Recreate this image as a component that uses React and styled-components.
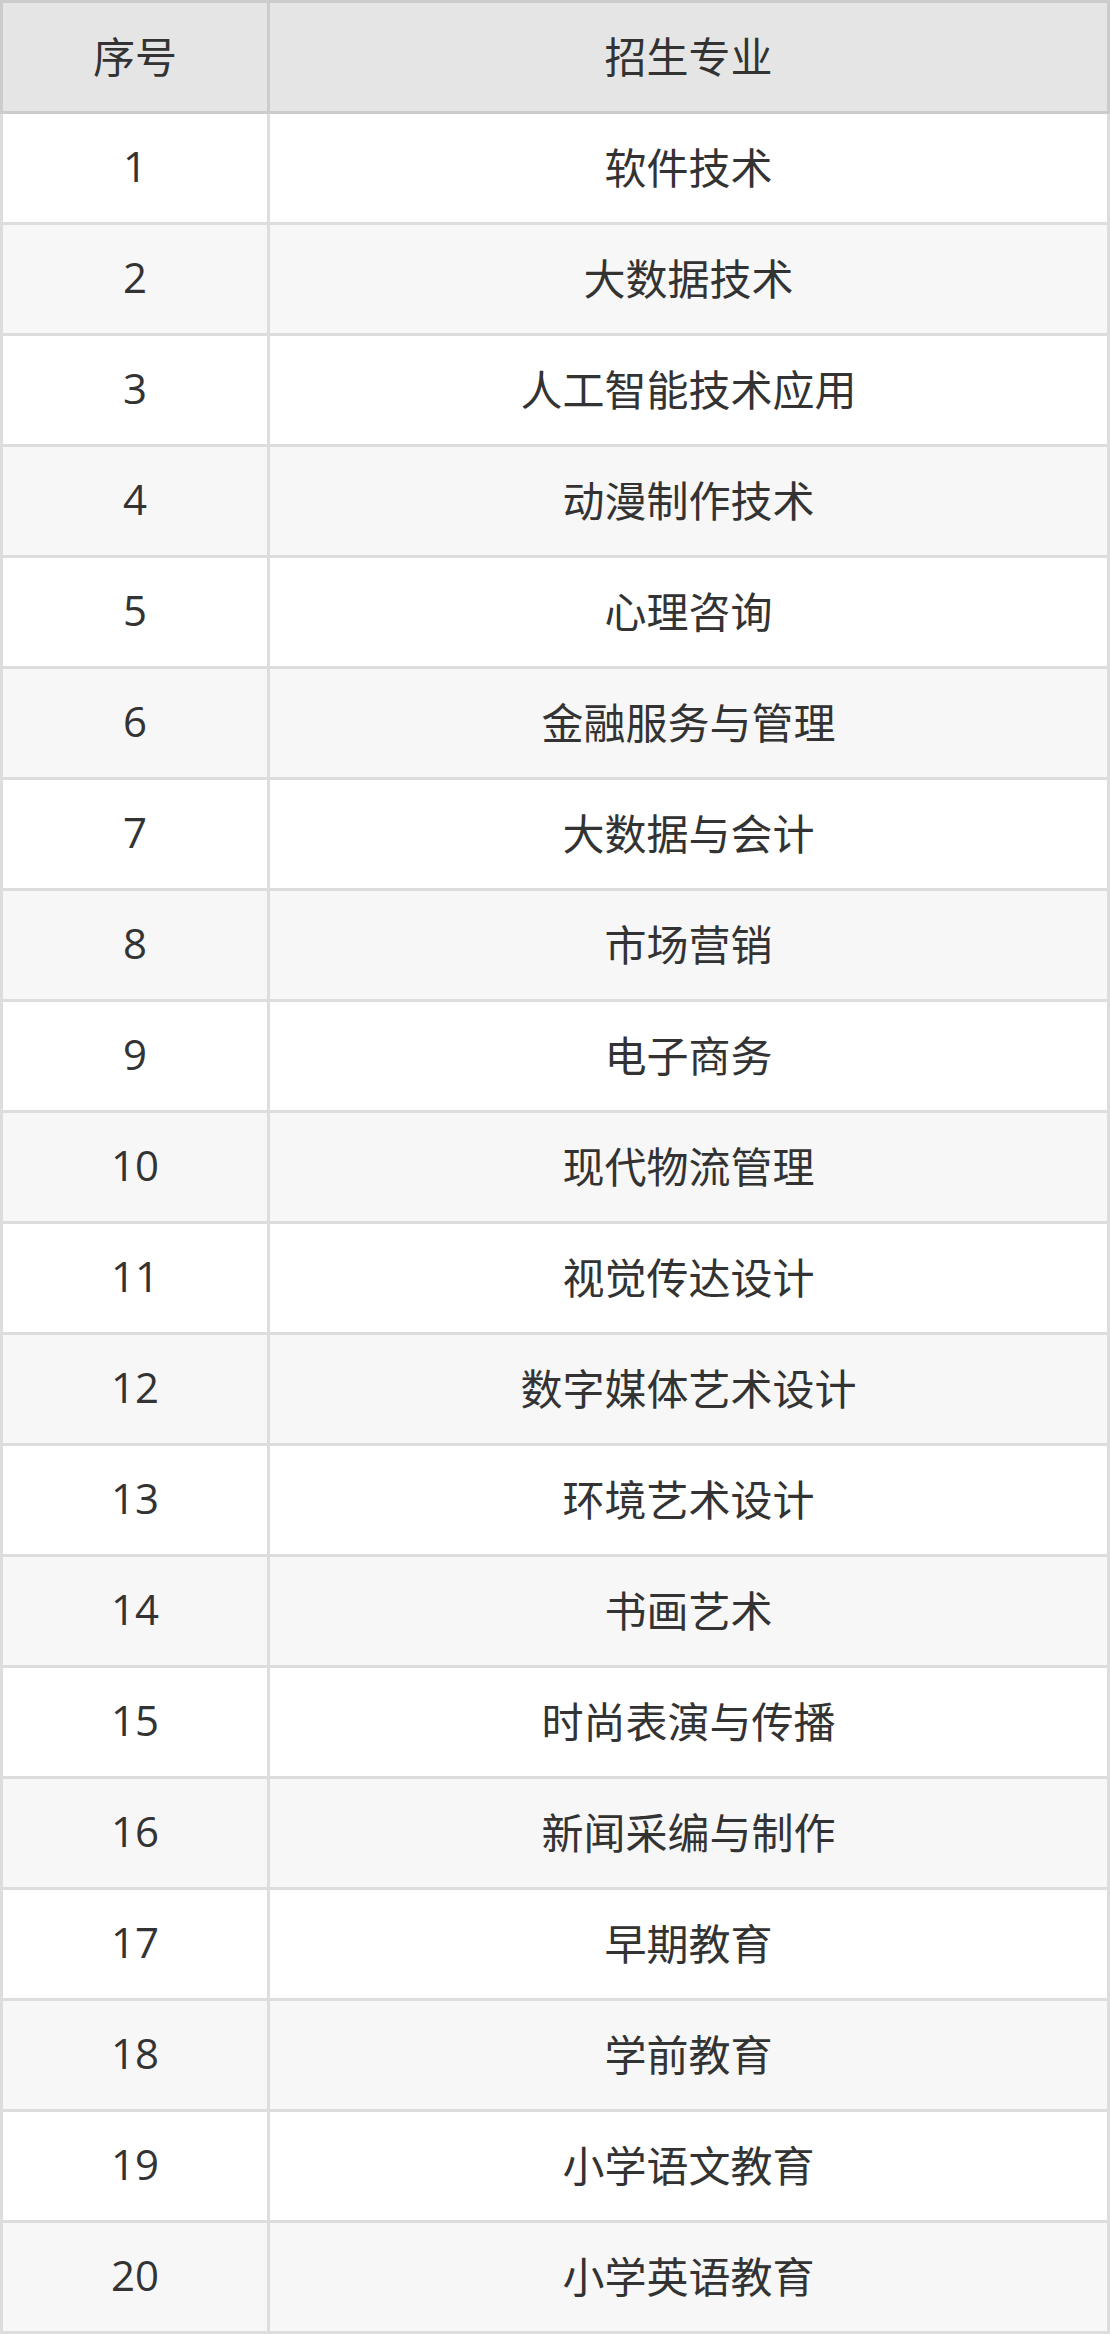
import React from "react";
import styled, { createGlobalStyle } from "styled-components";

const majors = [
  "软件技术",
  "大数据技术",
  "人工智能技术应用",
  "动漫制作技术",
  "心理咨询",
  "金融服务与管理",
  "大数据与会计",
  "市场营销",
  "电子商务",
  "现代物流管理",
  "视觉传达设计",
  "数字媒体艺术设计",
  "环境艺术设计",
  "书画艺术",
  "时尚表演与传播",
  "新闻采编与制作",
  "早期教育",
  "学前教育",
  "小学语文教育",
  "小学英语教育",
];

const GlobalStyle = createGlobalStyle`
  html, body {
    margin: 0;
    padding: 0;
    background: #fff;
  }
`;

// 표 전체
const Table = styled.table`
  width: 1110px;
  border-collapse: collapse;
  border-spacing: 0;
  table-layout: fixed;
  font-family: "Open Sans", "Noto Sans CJK SC", sans-serif;
  font-size: 42px;
  color: #333;
`;

// 글자를 조금 위로 올림 (행 높이는 108px 유지)
const HeadCell = styled.th`
  height: 103px;
  padding: 0 0 5px;
  border: 3px solid #ccc;
  background-color: #e5e5e5;
  font-weight: 400;
  text-align: center;
  vertical-align: middle;
  width: ${(p) => (p.$narrow ? "264px" : "auto")};
`;

const Row = styled.tr`
  background-color: ${(p) => (p.$odd ? "#f7f7f7" : "#fff")};
`;

const Cell = styled.td`
  height: 103px;
  padding: 0 0 5px;
  border: 3px solid #ddd;
  text-align: center;
  vertical-align: middle;
`;

function App() {
  return (
    <>
      <GlobalStyle />
      <Table>
        <thead>
          <tr>
            <HeadCell $narrow>序号</HeadCell>
            <HeadCell>招生专业</HeadCell>
          </tr>
        </thead>
        <tbody>
          {majors.map((name, i) => (
            <Row key={name} $odd={i % 2 === 1}>
              <Cell>{i + 1}</Cell>
              <Cell>{name}</Cell>
            </Row>
          ))}
        </tbody>
      </Table>
    </>
  );
}

export default App;
